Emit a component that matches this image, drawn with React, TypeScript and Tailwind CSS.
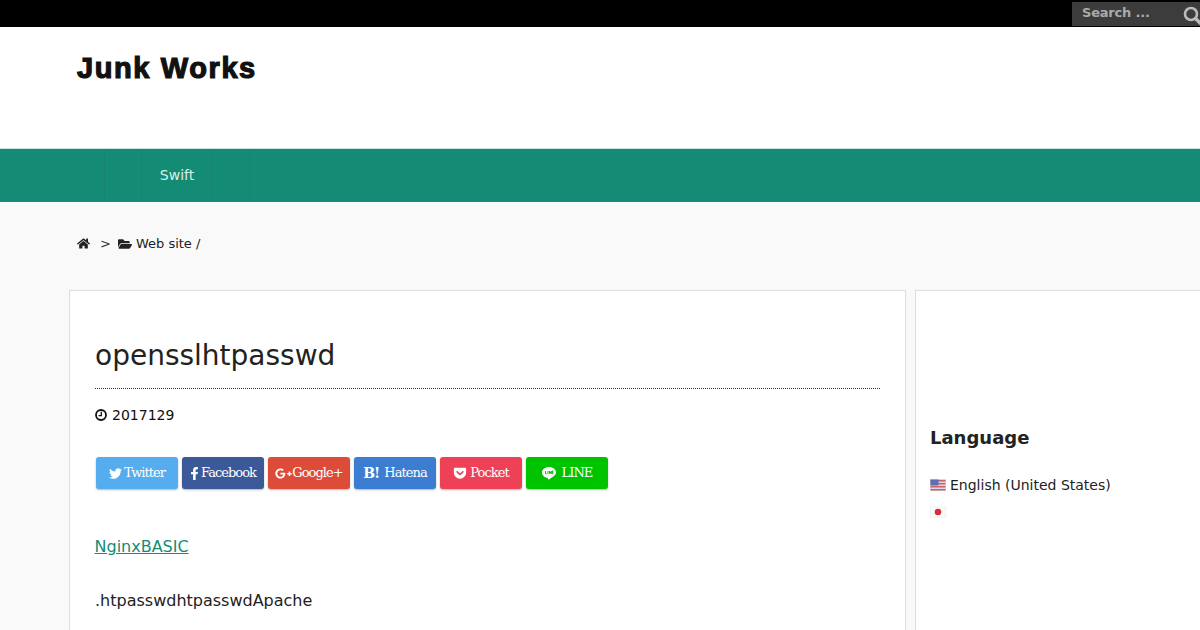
import { FaHome, FaFolderOpen, FaTwitter, FaFacebookF, FaGooglePlusG, FaGetPocket } from "react-icons/fa";

function LineIcon() {
    return (
        <svg width="14" height="13" viewBox="0 0 14 13" className="shrink-0">
            <path fill="#fff" d="M7 0C3.1 0 0 2.4 0 5.5c0 2.7 2.4 4.9 5.6 5.4.6.1.5.4.4 1-.1.5.1.8.6.5 1.500-.8 5-2.800 6.400-4.500C13.600 7.200 14 6.400 14 5.500 14 2.400 10.900 0 7 0z"/>
            <path stroke="#00c300" strokeWidth="1" fill="none" d="M3.500 4v2.800h1.300M6 4v2.800M7.500 6.800V4l1.800 2.800V4M11.500 4h-1.200v2.800h1.200M10.300 5.400h1"/>
        </svg>
    );
}

const buttons = [
    {label: "Twitter", color: "bg-[#55acee]", icon: <FaTwitter className="text-[13px]"/>, gap: "gap-[2px]"},
    {label: "Facebook", color: "bg-[#3b5998]", icon: <FaFacebookF className="text-[13px]"/>, gap: "gap-0 pr-[2px]"},
    {label: "Google+", color: "bg-[#dd4b39]", icon: <FaGooglePlusG className="text-[17px]"/>, gap: "gap-0"},
    {label: "Hatena", color: "bg-[#3c7dd1]", icon: <span className="font-bold text-[14px]">B!</span>, gap: "gap-[5px]"},
    {label: "Pocket", color: "bg-[#ee4056]", icon: <FaGetPocket className="text-[14px]"/>, gap: "gap-[3px]"},
    {label: "LINE", color: "bg-[#00c300]", icon: <LineIcon/>, gap: "gap-[6px]"},
];

function UsFlag() {
    return (
        <svg width="16" height="12" viewBox="0 0 16 12" className="shrink-0">
            <rect width="16" height="12" fill="#d8d8e0"/>
            <rect x="0.500" y="1" width="15" height="1.500" fill="#d0606a"/>
            <rect x="0.500" y="4" width="15" height="1.500" fill="#d0606a"/>
            <rect x="0.500" y="7" width="15" height="1.500" fill="#d0606a"/>
            <rect x="0.500" y="10" width="15" height="1.500" fill="#d0606a"/>
            <rect x="0.500" y="0.500" width="8" height="6" fill="#5a6fb8"/>
        </svg>
    );
}

function JpFlag() {
    return (
        <svg width="16" height="12" viewBox="0 0 16 12" className="shrink-0">
            <rect width="16" height="12" fill="#ececec"/>
            <rect x="0.500" y="0.500" width="15" height="11" fill="#fbfbfb"/>
            <circle cx="8" cy="6" r="3.300" fill="#d8303a"/>
        </svg>
    );
}

function ClockIcon() {
    return (
        <svg width="12" height="12" viewBox="0 0 12 12" fill="none" stroke="#111" className="shrink-0">
            <circle cx="6" cy="6" r="5" strokeWidth="1.800"/>
            <path d="M6.300 2.800V6.700H3.500" strokeWidth="1.300"/>
        </svg>
    );
}

export default function App() {
    return (
        <div className="h-[630px] w-[1200px] overflow-hidden bg-[#f9f9f9] font-['DejaVu_Sans',sans-serif] text-[#111]">
            <div className="flex h-[27px] justify-end bg-black pt-[2px]">
                <div className="flex h-[24px] w-[128px] items-center justify-between overflow-hidden bg-[#3c3c3c] pl-[10px]">
                    <span className="pb-[2px] text-[13px] font-bold tracking-[-0.2px] text-[#aaa]">Search ...</span>
                    <svg width="20" height="20" viewBox="0 0 20 20" className="mr-[-3px] mt-[4px] shrink-0" fill="none" stroke="#bbb">
                        <circle cx="8" cy="8" r="6" strokeWidth="2.600"/>
                        <path d="M12.500 12.500L18 18" strokeWidth="3.400"/>
                    </svg>
                </div>
            </div>

            <header className="h-[122px] bg-white pl-[77px] pt-[23px]">
                <h1 className="font-['Liberation_Sans',sans-serif] text-[29px] leading-[36px] font-bold tracking-[1.6px] text-[#111] [-webkit-text-stroke:1.2px_#111]">Junk Works</h1>
            </header>

            <nav className="-mt-px flex h-[54px] border-t border-[#c9e4dc] bg-[#148c75] pl-[104px]">
                <div className="w-[38px] border-x border-[#1a8270]"/>
                <div className="flex w-[70px] items-center justify-center text-[14px] text-[#d8f0e8]">Swift</div>
                <div className="w-[38px] border-x border-[#1a8270]"/>
            </nav>

            <div className="flex h-[88px] items-start gap-[10px] pl-[77px] pt-[33px] text-[13px] leading-[17px] text-[#222]">
                <FaHome className="mt-[2px] text-[13px]"/>
                <span className="text-[#333]">&gt;</span>
                <span className="-ml-[3px] flex items-center gap-[4px]"><FaFolderOpen className="text-[14px]"/>Web site /</span>
            </div>

            <div className="flex gap-[9px] pl-[69px]">
                <main className="h-[341px] w-[837px] shrink-0 border border-[#ddd] bg-white px-[25px] pt-[46px]">
                    <h2 className="border-b border-dotted border-[#333] pb-[14px] text-[28px] leading-[37px] text-[#222]">opensslhtpasswd</h2>
                    <div className="mt-[16px] flex items-center gap-[5px] text-[14px] leading-[20px]">
                        <ClockIcon/>2017129
                    </div>
                    <div className="mt-[32px] flex gap-[4px] pl-px">
                        {buttons.map(b => (
                            <div key={b.label} className={`flex h-[32px] w-[82px] items-center justify-center rounded-[3px] ${b.color} ${b.gap} font-['DejaVu_Serif',serif] text-[13px] tracking-[-0.95px] text-white shadow-[0_1px_2px_rgba(0,0,0,0.3)]`}>
                                {b.icon}{b.label}
                            </div>
                        ))}
                    </div>
                    <p className="mt-[47px] text-[16px] leading-[22px]">
                        <a className="-ml-[0.5px] text-[#148c75] underline">NginxBASIC</a>
                    </p>
                    <p className="mt-[32px] text-[16px] leading-[22px] text-[#222]">.htpasswdhtpasswdApache</p>
                </main>
                <aside className="h-[341px] flex-1 border border-r-0 border-[#ddd] bg-white px-[14px] pt-[134px]">
                    <h3 className="text-[18px] leading-[26px] font-bold text-[#222]">Language</h3>
                    <div className="mt-[24px] flex items-center gap-[4px] text-[14px] leading-[20px] text-[#222]">
                        <UsFlag/>English (United States)
                    </div>
                    <div className="mt-[7px] flex h-[20px] items-center"><JpFlag/></div>
                </aside>
            </div>
        </div>
    );
}
